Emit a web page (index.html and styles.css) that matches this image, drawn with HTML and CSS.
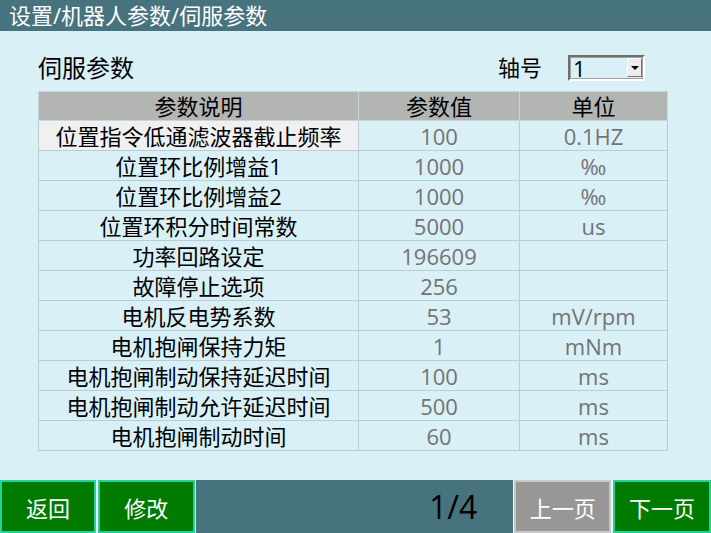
FILE: index.html
```html
<!DOCTYPE html>
<html lang="zh-CN">
<head>
    <meta charset="UTF-8">
    <title>伺服参数</title>
    <link rel="stylesheet" href="styles.css">
</head>
<body>
    <div class="titlebar">设置/机器人参数/伺服参数</div>

    <div class="content">
        <div class="toolbar">
            <div class="page-title">伺服参数</div>
            <div class="axis">
                <span class="axis-label">轴号</span>
                <div class="combo">
                    <span class="combo-value">1</span>
                    <span class="combo-btn"><span class="arrow"></span></span>
                </div>
            </div>
        </div>

        <table class="params">
            <thead>
                <tr>
                    <th class="col-name">参数说明</th>
                    <th class="col-value">参数值</th>
                    <th class="col-unit">单位</th>
                </tr>
            </thead>
            <tbody>
                <tr class="selected"><td>位置指令低通滤波器截止频率</td><td>100</td><td>0.1HZ</td></tr>
                <tr><td>位置环比例增益1</td><td>1000</td><td>‰</td></tr>
                <tr><td>位置环比例增益2</td><td>1000</td><td>‰</td></tr>
                <tr><td>位置环积分时间常数</td><td>5000</td><td>us</td></tr>
                <tr><td>功率回路设定</td><td>196609</td><td></td></tr>
                <tr><td>故障停止选项</td><td>256</td><td></td></tr>
                <tr><td>电机反电势系数</td><td>53</td><td>mV/rpm</td></tr>
                <tr><td>电机抱闸保持力矩</td><td>1</td><td>mNm</td></tr>
                <tr><td>电机抱闸制动保持延迟时间</td><td>100</td><td>ms</td></tr>
                <tr><td>电机抱闸制动允许延迟时间</td><td>500</td><td>ms</td></tr>
                <tr><td>电机抱闸制动时间</td><td>60</td><td>ms</td></tr>
            </tbody>
        </table>
    </div>

    <div class="footer">
        <button class="btn btn-green btn-back">返回</button>
        <button class="btn btn-green btn-edit">修改</button>
        <div class="pager">1/4</div>
        <button class="btn btn-gray btn-prev">上一页</button>
        <button class="btn btn-green btn-next">下一页</button>
    </div>
</body>
</html>
```

FILE: styles.css
```css
html, body {
    margin: 0;
    padding: 0;
}
body {
    width: 711px;
    height: 533px;
    display: flex;
    flex-direction: column;
    background-color: #d9f0f7;
    font-family: "Open Sans", "Noto Sans CJK SC", sans-serif;
    overflow: hidden;
}
.titlebar {
    height: 31px;
    line-height: 30px;
    padding-left: 9px;
    background-color: #47737f;
    color: #ffffff;
    font-size: 22px;
}
.content {
    padding: 20px 0 0 38px;
}
.toolbar {
    display: flex;
    justify-content: space-between;
    align-items: center;
    width: 607px;
    height: 33px;
    margin-bottom: 7px;
}
.page-title {
    font-size: 24px;
    color: #000000;
    line-height: 33px;
}
.axis {
    display: flex;
    align-items: center;
}
.axis-label {
    font-size: 22px;
    margin-right: 26px;
    line-height: 33px;
}
.combo {
    width: 73px;
    height: 22px;
    display: flex;
    align-items: center;
    justify-content: space-between;
    border: 2px solid;
    border-color: #6f6f6f #ffffff #ffffff #6f6f6f;
    outline: 1px solid #a0a0a0;
    outline-offset: -3px;
}
.combo-value {
    font-size: 22px;
    line-height: 22px;
    padding-left: 3px;
}
.combo-btn {
    width: 15px;
    height: 19px;
    margin-right: 1px;
    background-color: #ececec;
    border: 1px solid;
    border-color: #ffffff #777777 #777777 #ffffff;
    box-sizing: border-box;
    display: flex;
    align-items: center;
    justify-content: center;
}
.arrow {
    width: 0;
    height: 0;
    border-left: 4px solid transparent;
    border-right: 4px solid transparent;
    border-top: 4px solid #000000;
}
.params {
    border-collapse: collapse;
    width: 630px;
    table-layout: fixed;
    font-size: 22px;
}
.params th,
.params td {
    border: 1px solid #b8cdd5;
    padding: 0;
    text-align: center;
    height: 29px;
    line-height: 28px;
    white-space: nowrap;
}
.params th {
    background-color: #b3b5b3;
    font-weight: normal;
    color: #000000;
    height: 28px;
    border-color: #c5d6dc;
}
.col-name {
    width: 319px;
}
.col-value {
    width: 160px;
}
.params td {
    color: #737373;
}
.params td:first-child {
    color: #000000;
}
.params tr.selected td:first-child {
    background-color: #f0f0f0;
}
.footer {
    margin-top: auto;
    height: 53px;
    display: flex;
    gap: 2px;
    background-color: #eef7fa;
}
.btn {
    height: 53px;
    padding: 0;
    margin: 0;
    font-family: "Noto Sans CJK SC", sans-serif;
    font-size: 22px;
    color: #ffffff;
    border: 2px solid;
    cursor: pointer;
}
.btn-green {
    background-color: #007b00;
    border-color: #22d29c;
}
.btn-gray {
    background-color: #979797;
    border-color: #c8c8c8;
}
.btn-back {
    width: 96px;
}
.btn-edit {
    width: 97px;
}
.btn-prev {
    width: 97px;
    margin-left: -1px;
}
.btn-next {
    width: 98px;
}
.pager {
    width: 318px;
    margin-left: -1px;
    background-color: #47737f;
    color: #000000;
    font-size: 32px;
    display: flex;
    align-items: center;
    justify-content: flex-end;
    padding-right: 36px;
    box-sizing: border-box;
}
```
